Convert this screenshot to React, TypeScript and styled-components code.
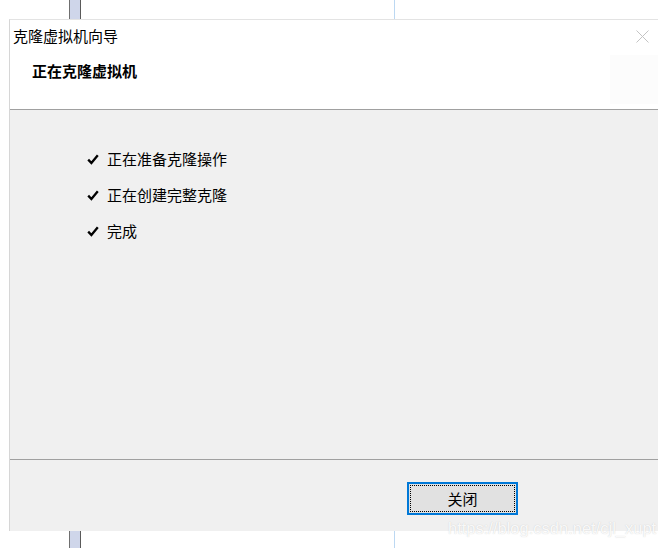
import React from 'react'
import styled, { createGlobalStyle } from 'styled-components'

const GlobalStyle = createGlobalStyle`
  html, body {
    margin: 0;
    padding: 0;
    background: #ffffff;
  }
  body {
    font-family: "Noto Sans CJK SC", "Noto Sans", sans-serif;
    color: #000000;
  }
`

const Desktop = styled.div`
  position: relative;
  width: 658px;
  height: 548px;
  overflow: hidden;
  background: #ffffff;
  padding: 19px 0 0 9px;
  box-sizing: border-box;
`

// pieces of the window that sits behind the dialog
const ScrollThumb = styled.div`
  position: absolute;
  left: 69px;
  top: 0;
  width: 10px;
  height: 548px;
  background: #cfd6ea;
  border-left: 1px solid #6f6f6f;
  border-right: 1px solid #5a5a5a;
`

const GuideLine = styled.div`
  position: absolute;
  left: 394px;
  top: 0;
  width: 1px;
  height: 548px;
  background: #bcd8f2;
`

const Dialog = styled.div`
  position: relative;
  z-index: 1;
  width: 649px;
  height: 512px;
  display: flex;
  flex-direction: column;
  background: #ffffff;
  border-top: 1px solid #e3e3e3;
  border-left: 1px solid #d6d6d6;
  box-sizing: border-box;
`

const TitleBar = styled.div`
  height: 32px;
  display: flex;
  align-items: center;
  justify-content: space-between;
  padding: 0 9px 0 3px;
  font-size: 15px;
  line-height: 32px;
`

const CloseIcon = styled.svg`
  width: 13px;
  height: 13px;
  display: block;
`

const Header = styled.div`
  height: 57px;
  display: flex;
  justify-content: space-between;
  align-items: flex-start;
  box-sizing: border-box;
  padding: 9px 0 0 22px;
`

const HeaderTitle = styled.h1`
  margin: 0;
  font-size: 15px;
  line-height: 20px;
  font-weight: 700;
`

const HeaderIcon = styled.div`
  width: 48px;
  height: 49px;
  margin-top: -6px;
  background: #fcfcfc;
`

const Body = styled.div`
  flex: 1;
  background: #f0f0f0;
  border-top: 1px solid #a0a0a0;
  padding: 39px 0 0 77px;
  display: flex;
  flex-direction: column;
  gap: 16px;
`

const Step = styled.div`
  display: flex;
  align-items: center;
  gap: 8px;
  font-size: 15px;
  line-height: 20px;
`

const Check = styled.svg`
  width: 12px;
  height: 11px;
  display: block;
`

const Footer = styled.div`
  height: 72px;
  box-sizing: border-box;
  background: #f0f0f0;
  border-top: 1px solid #a0a0a0;
  padding: 22px 0 0 397px;
`

const Button = styled.button`
  width: 111px;
  height: 33px;
  padding: 1px;
  background: #e1e1e1;
  border: 2px solid #0078d7;
  font-family: "Noto Sans CJK SC", "Noto Sans", sans-serif;
  font-size: 15px;
  color: #000000;
  cursor: pointer;
  box-sizing: border-box;
`

const FocusRect = styled.span`
  display: flex;
  align-items: center;
  justify-content: center;
  height: 100%;
  border: 1px dotted #000000;
  box-sizing: border-box;
  line-height: 20px;
`

const Watermark = styled.div`
  position: absolute;
  z-index: 2;
  left: 448px;
  top: 519px;
  font-family: "Liberation Sans", Arial, sans-serif;
  font-size: 16.5px;
  color: rgba(255, 255, 255, 0.9);
  text-shadow: 0 0 1px rgba(170, 170, 170, 0.6);
  white-space: nowrap;
`

const steps = ['正在准备克隆操作', '正在创建完整克隆', '完成']

const CheckMark = () => (
  <Check viewBox="0 0 12 11">
    <path d="M1.2 5.6 L4.4 9 L10.8 1.2" fill="none" stroke="#000" strokeWidth="2.3" strokeLinejoin="miter" />
  </Check>
)

export default function App() {
  return (
    <>
      <GlobalStyle />
      <Desktop>
        <ScrollThumb />
        <GuideLine />
        <Dialog>
          <TitleBar>
            <span>克隆虚拟机向导</span>
            <CloseIcon viewBox="0 0 13 13">
              <path d="M0.5 0.5 L12.5 12.5 M12.5 0.5 L0.5 12.5" stroke="#c4c4c4" strokeWidth="1" fill="none" />
            </CloseIcon>
          </TitleBar>
          <Header>
            <HeaderTitle>正在克隆虚拟机</HeaderTitle>
            <HeaderIcon />
          </Header>
          <Body>
            {steps.map((s) => (
              <Step key={s}>
                <CheckMark />
                <span>{s}</span>
              </Step>
            ))}
          </Body>
          <Footer>
            <Button>
              <FocusRect>关闭</FocusRect>
            </Button>
          </Footer>
        </Dialog>
        <Watermark>https://blog.csdn.net/cjl_xupt</Watermark>
      </Desktop>
    </>
  )
}
